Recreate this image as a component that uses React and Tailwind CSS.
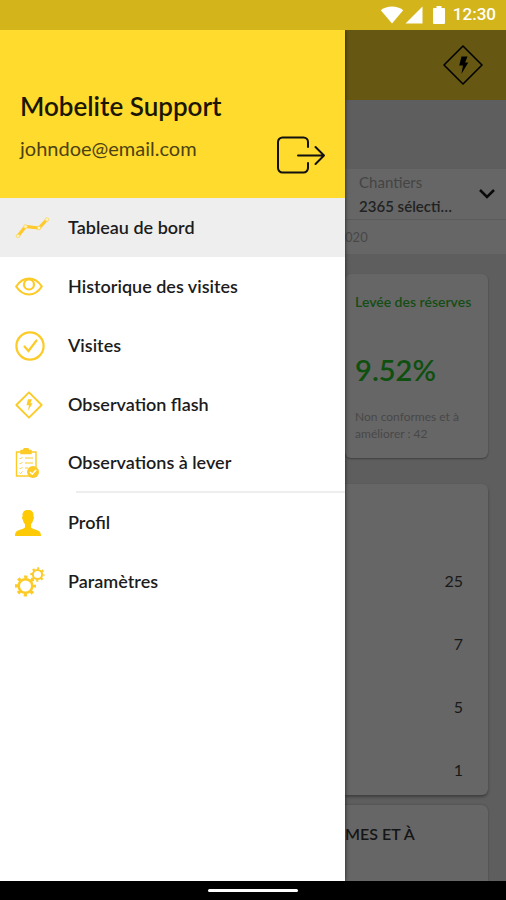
import clsx from "clsx";

function WifiIcon() {
  return (
    <svg viewBox="0 0 24 18" className="h-[18px] w-6" fill="#fff" aria-hidden="true">
      <path d="M12 17.5 0.8 4.2C4 1.7 7.8 0.5 12 0.5s8 1.2 11.2 3.7Z" />
    </svg>
  );
}

function SignalIcon() {
  return (
    <svg viewBox="0 0 18 18" className="h-[18px] w-[18px]" fill="#fff" aria-hidden="true">
      <path d="M0.5 17.5 17.5 0.5v17Z" />
    </svg>
  );
}

function BatteryIcon() {
  return (
    <svg viewBox="0 0 12 18" className="h-[18px] w-3" fill="#fff" aria-hidden="true">
      <path d="M3.5 0h5v2H11a1 1 0 0 1 1 1v14a1 1 0 0 1-1 1H1a1 1 0 0 1-1-1V3a1 1 0 0 1 1-1h2.5Z" />
    </svg>
  );
}

function FlashIcon({ className, strokeWidth }) {
  return (
    <svg viewBox="0 0 42 42" className={className} fill="none" stroke="currentColor" aria-hidden="true">
      <path d="M21 2 40 21 21 40 2 21Z" strokeWidth={strokeWidth} strokeLinejoin="round" />
      <path d="M19.5 12.5h6l-2.4 6h3.2L19.4 30l1.6-8.6h-3.8Z" fill="currentColor" stroke="none" />
    </svg>
  );
}

function LogoutIcon() {
  return (
    <svg viewBox="0 0 50 38" className="h-[38px] w-[50px]" fill="none" stroke="#111" strokeWidth="2" strokeLinecap="round" strokeLinejoin="round" aria-hidden="true">
      <path d="M32 11V6a4.500 4.500 0 0 0-4.500-4.500h-21A4.500 4.500 0 0 0 2 6v26a4.500 4.500 0 0 0 4.500 4.500h21A4.500 4.500 0 0 0 32 32v-5" />
      <path d="M22 19.500h26M39.500 11l8.500 8.500-8.500 8.500" />
    </svg>
  );
}

function ChartIcon() {
  return (
    <svg viewBox="0 0 36 22" className="h-[22px] w-9" aria-hidden="true">
      <path d="M3 19 10.500 9.500 24 11 32 2.500" fill="none" stroke="#fdc92c" strokeWidth="3.200" />
      <g fill="#fff3c4" stroke="#fdd55c" strokeWidth="0.8">
        <circle cx="3" cy="19" r="1.800" />
        <circle cx="10.500" cy="9.500" r="1.800" />
        <circle cx="24" cy="11" r="1.800" />
        <circle cx="32" cy="2.500" r="1.800" />
      </g>
    </svg>
  );
}

function EyeIcon() {
  return (
    <svg viewBox="0 0 28 20" className="h-5 w-7" fill="none" stroke="#fccb27" strokeWidth="2.200" strokeLinejoin="round" aria-hidden="true">
      <path d="M1.200 9.500C4.500 4.500 9 1.500 14 1.500s9.500 3 12.800 8c-3.300 5-7.800 8-12.800 8s-9.500-3-12.800-8Z" />
      <circle cx="14" cy="7.500" r="5" />
    </svg>
  );
}

function CheckIcon() {
  return (
    <svg viewBox="0 0 30 30" className="h-[30px] w-[30px]" fill="none" stroke="#fccb27" strokeWidth="2.200" strokeLinecap="round" aria-hidden="true">
      <circle cx="15" cy="15" r="13.600" />
      <path d="m9.500 15.500 4 4.500L21.500 9.500" />
    </svg>
  );
}

function ClipboardIcon() {
  return (
    <svg viewBox="0 0 24 30" className="h-[30px] w-6" fill="none" stroke="#fccb27" strokeWidth="1.400" aria-hidden="true">
      <path d="M6 4H1.500v24H14M16 4h5v15.500" />
      <path d="M6 5.500v-3h2.500a2.500 2.500 0 0 1 5 0H16v3Z" fill="#fccb27" />
      <path d="m4.500 10 1 1 2-2M4.500 15l1 1 2-2M4.500 20l1 1 2-2M4.500 24.500l1 1 2-2" strokeWidth="0.900" />
      <path d="M10 10h8M10 15h8M10 20h3" strokeWidth="1.100" />
      <circle cx="18" cy="24" r="6" fill="#fccb27" stroke="none" />
      <path d="m15 24 2.200 2.200 4-4.400" stroke="#fff" strokeWidth="1.400" />
    </svg>
  );
}

function PersonIcon() {
  return (
    <svg viewBox="0 0 26 28" className="h-7 w-[26px]" fill="#fdca05" aria-hidden="true">
      <path d="M13 1c3.700 0 5.500 1.800 5.500 5.500v1c.8.500.5 2.700-.4 3.300-.2 1.900-.9 3.400-2.100 4.400v3c.6 1.200 2 1.500 4.300 2.200 4 1.200 5.700 2.200 5.700 6.600H0c0-4.400 1.700-5.400 5.700-6.600 2.300-.7 3.700-1 4.300-2.200v-3c-1.200-1-1.900-2.500-2.100-4.400-.9-.6-1.200-2.800-.4-3.300v-1C7.500 2.800 9.300 1 13 1Z" />
    </svg>
  );
}

function GearsIcon() {
  return (
    <svg viewBox="0 0 30 30" className="h-[30px] w-[30px]" fill="none" stroke="#fccb27" aria-hidden="true">
      <circle cx="10.500" cy="19" r="6.800" strokeWidth="2.600" />
      <circle cx="10.500" cy="19" r="9" strokeWidth="3" strokeDasharray="3.300 3.770" strokeDashoffset="1.650" />
      <circle cx="22.500" cy="7.500" r="4.600" strokeWidth="2" />
      <circle cx="22.500" cy="7.500" r="6.200" strokeWidth="2" strokeDasharray="2.200 2.670" strokeDashoffset="1.100" />
    </svg>
  );
}

const menu = [
  { label: "Tableau de bord", icon: <ChartIcon />, active: true },
  { label: "Historique des visites", icon: <EyeIcon /> },
  { label: "Visites", icon: <CheckIcon /> },
  { label: "Observation flash", icon: <FlashIcon className="h-7 w-7 text-[#fccb27]" strokeWidth="2.8" /> },
  { label: "Observations à lever", icon: <ClipboardIcon />, divider: true },
  { label: "Profil", icon: <PersonIcon /> },
  { label: "Paramètres", icon: <GearsIcon /> },
];

const counts = [25, 7, 5, 1];

function StatusBar() {
  return (
    <div className="z-20 flex h-[30px] items-center justify-end bg-[#d3b51b] pr-2.5 text-white">
      <WifiIcon />
      <span className="ml-px"><SignalIcon /></span>
      <span className="ml-2.5"><BatteryIcon /></span>
      <time className="ml-2 font-[Roboto,sans-serif] text-[17px] font-medium">12:30</time>
    </div>
  );
}

function Drawer() {
  return (
    <aside className="z-10 flex w-[68.2%] shrink-0 flex-col bg-white shadow-[0_0_4px_rgba(0,0,0,0.7)]">
      <header className="flex h-[168px] items-end justify-between bg-[#ffdb2d] pr-[19px] pb-6 pl-5">
        <div className="pb-3.5">
          <h1 className="text-[26px] leading-8 font-semibold text-[#1a1600]">Mobelite Support</h1>
          <p className="mt-3.5 text-[20px] leading-6 text-[#4d4212]">johndoe@email.com</p>
        </div>
        <button type="button" aria-label="Se déconnecter">
          <LogoutIcon />
        </button>
      </header>
      <nav>
        <ul>
          {menu.map((item) => (
            <li key={item.label} className={clsx("flex h-[59px] flex-col", item.active && "bg-[#eee]")}>
              <a href="#" className="flex grow items-center pl-[15px] text-[18px] font-semibold text-[#1c1c1c]">
                <span className="flex w-[53px] shrink-0">{item.icon}</span>
                {item.label}
              </a>
              {item.divider && <hr className="ml-[76px] border-t-2 border-[#eee]" />}
            </li>
          ))}
        </ul>
      </nav>
    </aside>
  );
}

function Dashboard() {
  return (
    <main className="flex min-w-0 grow flex-col overflow-hidden bg-[#5e5e5e]">
      <header className="flex h-[70px] items-center justify-end bg-[#665812] pr-[22px]">
        <button type="button" aria-label="Observation flash" className="text-black">
          <FlashIcon className="h-[42px] w-[42px]" strokeWidth="1.6" />
        </button>
      </header>
      <section className="mt-[69px] bg-[#666]">
        <div className="flex h-[51px] items-center justify-between border-b border-[#5b5b5b] pr-2.5 pl-3.5">
          <div className="flex flex-col">
            <label htmlFor="chantiers" className="text-[15px] leading-6 text-[#444]">Chantiers</label>
            <select id="chantiers" className="appearance-none bg-transparent text-[15px] leading-6 font-semibold text-[#222]">
              <option>2365 sélecti…</option>
            </select>
          </div>
          <svg viewBox="0 0 18 12" className="h-3 w-[18px] shrink-0" fill="none" stroke="#0a0a0a" strokeWidth="2.500" aria-hidden="true">
            <path d="m2 2 7 7 7-7" />
          </svg>
        </div>
        <p className="h-[34px] text-[13px] leading-[34px] text-[#484848]">020</p>
      </section>
      <div className="mt-5 mr-[18px] flex flex-col">
        <article className="h-[184px] rounded-md bg-[#666] pl-2.5 shadow-[0_1px_2px_rgba(0,0,0,0.35)]">
          <h2 className="pt-4 text-[14px] leading-6 font-semibold whitespace-nowrap text-[#154d15]">Levée des réserves</h2>
          <p className="mt-10 text-[29px] leading-8 font-semibold text-[#0f4f0f]">9.52%</p>
          <p className="mt-[22px] text-[12px] leading-[17px] text-[#484848]">Non conformes et à améliorer : 42</p>
        </article>
        <article className="mt-[26px] rounded-r-md bg-[#666] pt-[72px] pr-[25px] shadow-[0_2px_3px_rgba(0,0,0,0.35)]">
          <ul className="flex flex-col gap-[13px]">
            {counts.map((count) => (
              <li key={count} className="flex h-[50px] items-center justify-end text-[16px] text-[#181818]">{count}</li>
            ))}
          </ul>
        </article>
      </div>
      <article className="mt-2.5 mr-[18px] grow rounded-tr-md bg-[#666] pt-[17px] shadow-[0_0_2px_rgba(0,0,0,0.3)]">
        <h2 className="text-[16px] leading-6 font-semibold text-[#151515]">MES ET À</h2>
      </article>
    </main>
  );
}

export default function App() {
  return (
    <div className="flex min-h-screen flex-col bg-black font-[Lato,sans-serif]">
      <StatusBar />
      <div className="flex grow">
        <Drawer />
        <Dashboard />
      </div>
      <footer className="flex h-[19px] items-center justify-center bg-black">
        <span className="h-[3px] w-[90px] rounded-full bg-white" />
      </footer>
    </div>
  );
}
